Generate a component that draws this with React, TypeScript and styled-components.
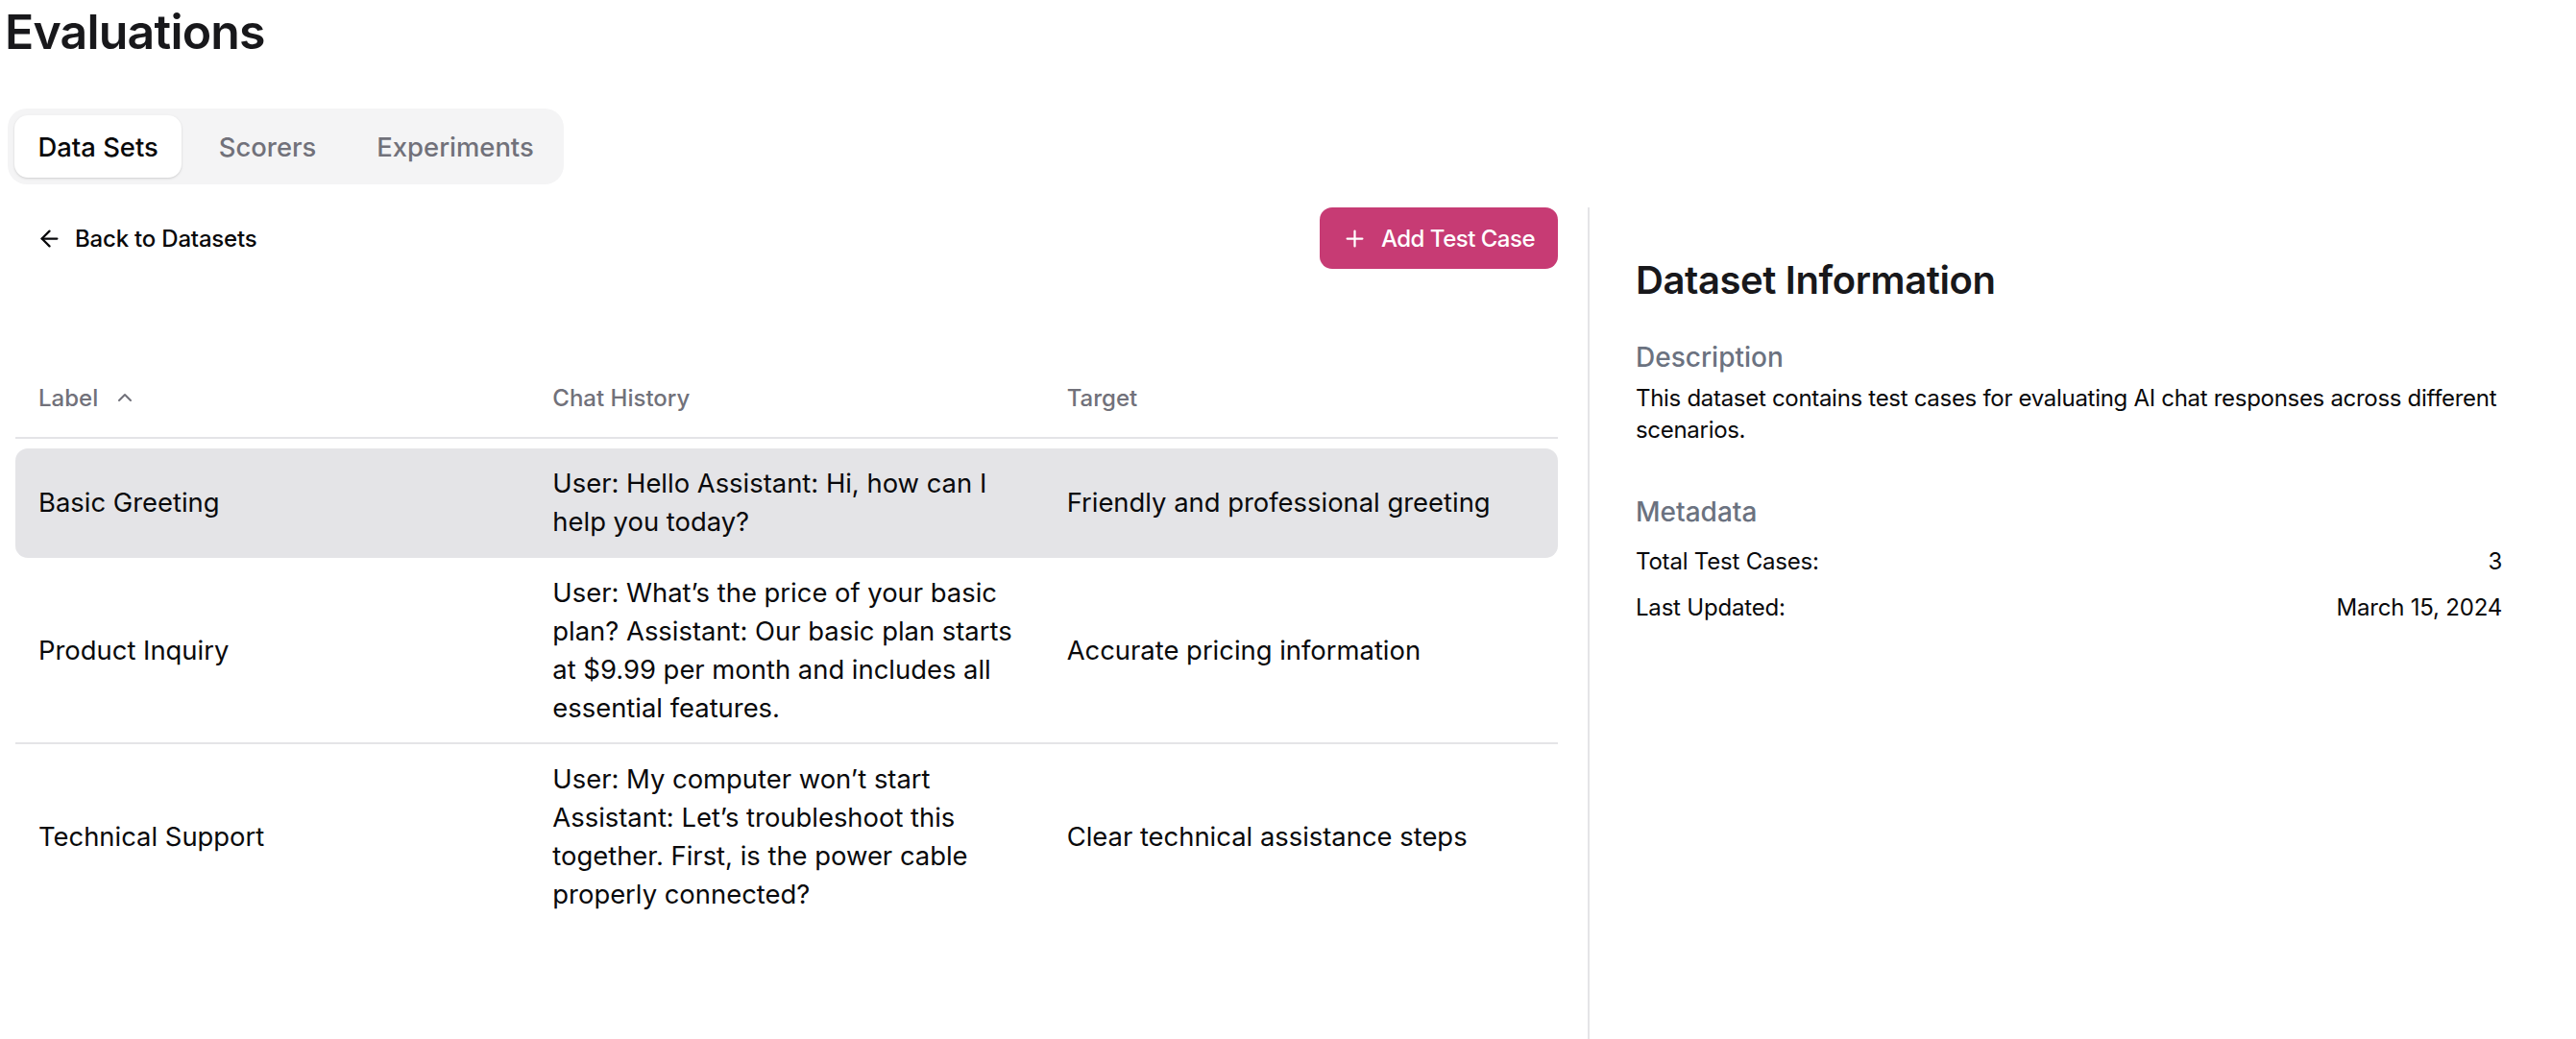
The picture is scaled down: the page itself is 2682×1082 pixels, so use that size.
import React from "react";
import styled, { createGlobalStyle } from "styled-components";
import { ArrowLeft, ChevronUp, Plus } from "lucide-react";

const GlobalStyle = createGlobalStyle`
  html, body {
    margin: 0;
    padding: 0;
    background: #ffffff;
  }
  body {
    font-family: Inter, "Noto Sans", "Liberation Sans", sans-serif;
    color: #09090b;
    -webkit-font-smoothing: antialiased;
  }
  * { box-sizing: border-box; }
`;

const Page = styled.div`
  display: flex;
  flex-direction: column;
  min-height: 100vh;
  padding: 3px 0 0 8px;
`;

const Title = styled.h1`
  margin: 0 0 0 -3px;
  font-size: 50px;
  line-height: 60px;
  font-weight: 600;
  letter-spacing: -0.8px;
  color: #18181b;
`;

const TabList = styled.div`
  display: inline-flex;
  align-self: flex-start;
  align-items: center;
  gap: 14px;
  margin-top: 50px;
  height: 79px;
  padding: 0 7px;
  border-radius: 20px;
  background: #f4f4f5;
`;

const Tab = styled.button<{ $active?: boolean }>`
  height: 65px;
  padding: 0 24.5px;
  border: none;
  border-radius: 14px;
  font-family: inherit;
  font-size: 27.4px;
  font-weight: 500;
  color: ${(p) => (p.$active ? "#09090b" : "#71717a")};
  background: ${(p) => (p.$active ? "#ffffff" : "transparent")};
  box-shadow: ${(p) =>
    p.$active ? "0 1px 3px rgba(0,0,0,0.10), 0 1px 2px rgba(0,0,0,0.06)" : "none"};
  cursor: pointer;
`;

const Main = styled.div`
  display: flex;
  flex: 1;
  margin-top: 24px;
`;

const LeftColumn = styled.section`
  flex: 1;
  min-width: 0;
  padding: 0 31px 0 8px;
`;

const Toolbar = styled.div`
  display: flex;
  align-items: center;
  justify-content: space-between;
  height: 64px;
`;

const BackButton = styled.button`
  display: inline-flex;
  align-items: center;
  gap: 13px;
  height: 64px;
  padding: 0 20px 0 22px;
  border: none;
  background: transparent;
  font-family: inherit;
  font-size: 24px;
  font-weight: 500;
  letter-spacing: -0.2px;
  color: #09090b;
  cursor: pointer;
`;

const PrimaryButton = styled.button`
  display: inline-flex;
  align-items: center;
  gap: 14px;
  height: 64px;
  padding: 0 24px 0 23px;
  border: none;
  border-radius: 13px;
  background: #c73b74;
  color: #ffffff;
  font-family: inherit;
  font-size: 24px;
  font-weight: 500;
  letter-spacing: -0.5px;
  cursor: pointer;
`;

const Table = styled.div`
  margin-top: 93px;
`;

const HeaderRow = styled.div`
  display: grid;
  grid-template-columns: repeat(3, 1fr);
  align-items: center;
  height: 84px;
  border-bottom: 2px solid #e4e4e7;
`;

const HeaderCell = styled.div`
  display: flex;
  align-items: center;
  gap: 16px;
  padding: 0 24px;
  font-size: 24px;
  font-weight: 500;
  color: #71717a;
`;

const Body = styled.div`
  padding-top: 10px;
`;

const Row = styled.div<{ $selected?: boolean; $last?: boolean }>`
  display: grid;
  grid-template-columns: repeat(3, 1fr);
  align-items: center;
  border-bottom: ${(p) => (p.$last ? "none" : "2px solid #e4e4e7")};
  background: ${(p) => (p.$selected ? "#e4e4e7" : "transparent")};
  border-radius: ${(p) => (p.$selected ? "13px" : "0")};
`;

const Cell = styled.div`
  padding: 16px 24px;
  font-size: 27.4px;
  line-height: 40px;
  color: #09090b;
`;

const InfoPanel = styled.aside`
  flex: 0 0 1029px;
  border-left: 2px solid #e4e4e7;
  padding: 50px 77px 0 48px;
`;

const PanelTitle = styled.h2`
  margin: 0;
  font-size: 40px;
  line-height: 52px;
  font-weight: 600;
  letter-spacing: -0.4px;
  color: #18181b;
`;

const Section = styled.div<{ $gap: number }>`
  margin-top: ${(p) => p.$gap}px;
`;

const SectionHeading = styled.h3`
  margin: 0;
  font-size: 28px;
  line-height: 41px;
  font-weight: 500;
  color: #6b7280;
`;

const SectionText = styled.p`
  margin: 5px 0 0;
  font-size: 24px;
  line-height: 33px;
  letter-spacing: -0.3px;
  color: #09090b;
`;

const MetaList = styled.dl`
  display: flex;
  flex-direction: column;
  gap: 14px;
  margin: 14px 0 0;
`;

const MetaRow = styled.div`
  display: flex;
  justify-content: space-between;
  font-size: 24px;
  line-height: 34px;
  letter-spacing: -0.2px;
  color: #09090b;
`;

const MetaTerm = styled.dt`
  margin: 0;
`;

const MetaValue = styled.dd`
  margin: 0;
`;

const rows = [
  {
    label: "Basic Greeting",
    chat: "User: Hello Assistant: Hi, how can I help you today?",
    target: "Friendly and professional greeting",
  },
  {
    label: "Product Inquiry",
    chat: "User: What\u2019s the price of your basic plan? Assistant: Our basic plan starts at $9.99 per month and includes all essential features.",
    target: "Accurate pricing information",
  },
  {
    label: "Technical Support",
    chat: "User: My computer won\u2019t start Assistant: Let\u2019s troubleshoot this together. First, is the power cable properly connected?",
    target: "Clear technical assistance steps",
  },
];

export default function App() {
  return (
    <>
      <GlobalStyle />
      <Page>
        <Title>Evaluations</Title>
        <TabList>
          <Tab $active>Data Sets</Tab>
          <Tab>Scorers</Tab>
          <Tab>Experiments</Tab>
        </TabList>
        <Main>
          <LeftColumn>
            <Toolbar>
              <BackButton>
                <ArrowLeft size={27} strokeWidth={2} />
                Back to Datasets
              </BackButton>
              <PrimaryButton>
                <Plus size={27} strokeWidth={2} />
                Add Test Case
              </PrimaryButton>
            </Toolbar>
            <Table>
              <HeaderRow>
                <HeaderCell>
                  Label
                  <ChevronUp size={24} strokeWidth={2} />
                </HeaderCell>
                <HeaderCell>Chat History</HeaderCell>
                <HeaderCell>Target</HeaderCell>
              </HeaderRow>
              <Body>
                {rows.map((r, i) => (
                  <Row key={r.label} $selected={i === 0} $last={i === rows.length - 1}>
                    <Cell>{r.label}</Cell>
                    <Cell>{r.chat}</Cell>
                    <Cell>{r.target}</Cell>
                  </Row>
                ))}
              </Body>
            </Table>
          </LeftColumn>
          <InfoPanel>
            <PanelTitle>Dataset Information</PanelTitle>
            <Section $gap={34}>
              <SectionHeading>Description</SectionHeading>
              <SectionText>
                This dataset contains test cases for evaluating AI chat responses across different
                scenarios.
              </SectionText>
            </Section>
            <Section $gap={49}>
              <SectionHeading>Metadata</SectionHeading>
              <MetaList>
                <MetaRow>
                  <MetaTerm>Total Test Cases:</MetaTerm>
                  <MetaValue>3</MetaValue>
                </MetaRow>
                <MetaRow>
                  <MetaTerm>Last Updated:</MetaTerm>
                  <MetaValue>March 15, 2024</MetaValue>
                </MetaRow>
              </MetaList>
            </Section>
          </InfoPanel>
        </Main>
      </Page>
    </>
  );
}
